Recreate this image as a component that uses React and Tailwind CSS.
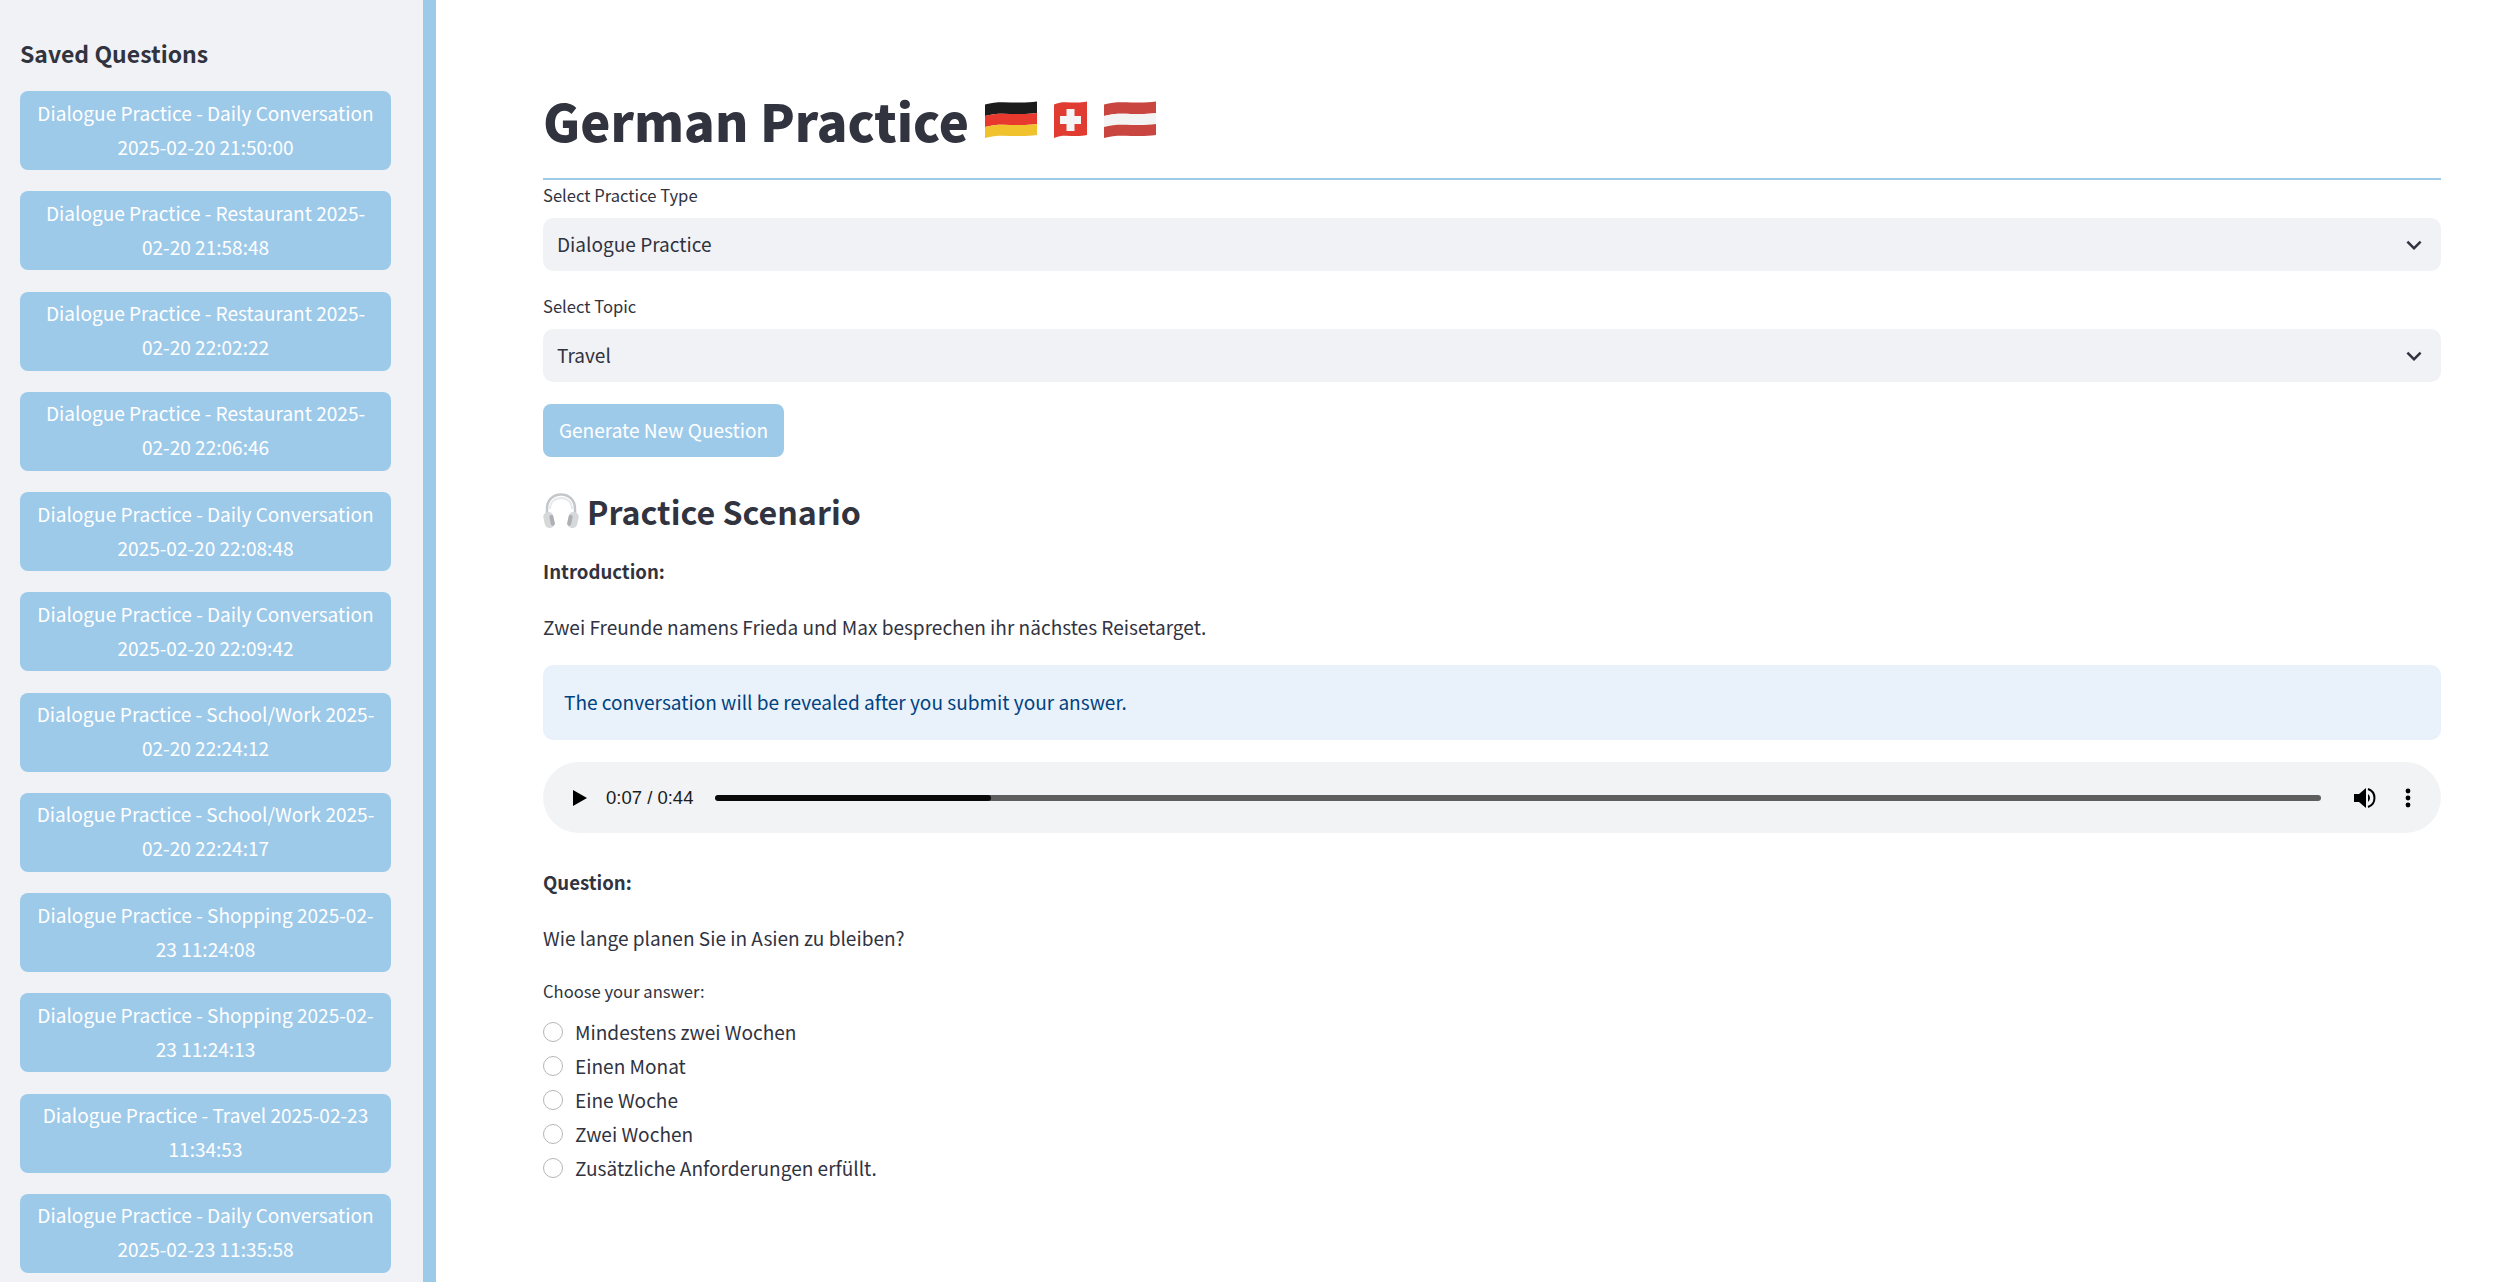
const saved = [
  "Dialogue Practice - Daily Conversation 2025-02-20 21:50:00",
  "Dialogue Practice - Restaurant 2025-02-20 21:58:48",
  "Dialogue Practice - Restaurant 2025-02-20 22:02:22",
  "Dialogue Practice - Restaurant 2025-02-20 22:06:46",
  "Dialogue Practice - Daily Conversation 2025-02-20 22:08:48",
  "Dialogue Practice - Daily Conversation 2025-02-20 22:09:42",
  "Dialogue Practice - School/Work 2025-02-20 22:24:12",
  "Dialogue Practice - School/Work 2025-02-20 22:24:17",
  "Dialogue Practice - Shopping 2025-02-23 11:24:08",
  "Dialogue Practice - Shopping 2025-02-23 11:24:13",
  "Dialogue Practice - Travel 2025-02-23 11:34:53",
  "Dialogue Practice - Daily Conversation 2025-02-23 11:35:58",
];
const answers = ["Mindestens zwei Wochen", "Einen Monat", "Eine Woche", "Zwei Wochen", "Zusätzliche Anforderungen erfüllt."];

function Flag({ w, children }) {
  return (
    <svg width={w} height="38" viewBox={`0 0 ${w} 38`} className="shrink-0">
      {children}
    </svg>
  );
}
const wave = (w, a, b) =>
  `M0 ${a + 3} C${w * 0.3} ${a - 2} ${w * 0.6} ${a + 3} ${w} ${a} V${b} C${w * 0.6} ${b + 3} ${w * 0.3} ${b - 2} 0 ${b + 3} Z`;

function Germany() {
  return (
    <Flag w={52}>
      <path d={wave(52, 0.5, 12)} fill="#1c1c1c" />
      <path d={wave(52, 12, 23)} fill="#e8392f" />
      <path d={wave(52, 23, 34)} fill="#f0c22e" />
    </Flag>
  );
}
function Swiss() {
  return (
    <Flag w={33}>
      <path d={wave(33, 0.5, 34)} fill="#e03c31" />
      <path d="M12.5 8h8v7h6.5v8h-6.5v7h-8v-7H6v-8h6.5z" fill="#f4f4f4" />
    </Flag>
  );
}
function Austria() {
  return (
    <Flag w={52}>
      <path d={wave(52, 0.5, 12)} fill="#c9453f" />
      <path d={wave(52, 12, 23)} fill="#f3f3f3" />
      <path d={wave(52, 23, 34)} fill="#c9453f" />
    </Flag>
  );
}
function Headphones() {
  return (
    <svg width="36" height="38" viewBox="0 0 36 38" className="shrink-0">
      <path d="M4 24V17C4 8 10 2.5 18 2.5S32 8 32 17v7" fill="none" stroke="#c4c7ca" strokeWidth="2.5" />
      <path d="M7 17C7 10 12 6 18 6s11 4 11 11" fill="none" stroke="#e6e8ea" strokeWidth="2" />
      <rect x="1" y="20" width="10" height="16" rx="4.5" fill="#d6d8da" transform="rotate(-12 6 28)" />
      <rect x="25" y="20" width="10" height="16" rx="4.5" fill="#d6d8da" transform="rotate(12 30 28)" />
      <rect x="7" y="23" width="4" height="11" rx="2" fill="#acafb3" transform="rotate(-12 8 28)" />
      <rect x="25" y="23" width="4" height="11" rx="2" fill="#acafb3" transform="rotate(12 28 28)" />
    </svg>
  );
}
function Chevron() {
  return (
    <svg width="30" height="30" viewBox="0 0 24 24" className="shrink-0">
      <path d="M7.41 8.59 12 13.17l4.59-4.58L18 10l-6 6-6-6z" fill="#31333f" />
    </svg>
  );
}
function Select({ label, value, top }) {
  return (
    <div className={top}>
      <div className="h-[33px] text-[16.6px] leading-[31px]">{label}</div>
      <div className="mt-[5px] flex h-[53px] items-center justify-between rounded-[10px] bg-[#f0f2f6] pl-[14px] pr-[12px] text-[19.06px] leading-[30px]">
        <span className="pb-[2px]">{value}</span>
        <Chevron />
      </div>
    </div>
  );
}

export default function App() {
  return (
    <div className="flex h-[1282px] w-full overflow-hidden bg-white font-['Noto_Sans_CJK_SC',sans-serif] text-[#31333f]">
      <aside className="flex w-[423px] shrink-0 flex-col overflow-hidden bg-[#f0f2f6] pl-[20px] pr-[32px]">
        <h2 className="mt-[36px] h-[36px] text-[23px] font-semibold leading-[34px]">Saved Questions</h2>
        <div className="mt-[19px] flex flex-col gap-[21.27px]">
          {saved.map((s) => (
            <button key={s} className="h-[79px] w-full shrink-0 rounded-[8px] bg-[#9ecaea] px-[16px] pb-[2px] text-center text-[19.06px] leading-[34px] text-white">
              {s}
            </button>
          ))}
        </div>
      </aside>
      <div className="w-[13px] shrink-0 bg-[#9ecaea]" />
      <main className="min-w-0 flex-1 pl-[107px] pr-[69px]">
        <div className="mt-[82px] flex h-[76px] items-center gap-[16px]">
          <h1 className="text-[50.8px] font-black leading-[70px]">German Practice</h1>
          <div className="flex items-center gap-[17px]">
            <Germany />
            <Swiss />
            <Austria />
          </div>
        </div>
        <div className="mt-[20px] h-[2px] bg-[#9ecaea]" />
        <Select label="Select Practice Type" value="Dialogue Practice" top="" />
        <Select label="Select Topic" value="Travel" top="mt-[20px]" />
        <button className="mt-[22px] flex h-[53px] w-[241px] items-center justify-center rounded-[8px] bg-[#9ecaea] pb-[2px] text-[19.06px] leading-[30px] text-white">
          Generate New Question
        </button>
        <div className="mt-[34px] flex h-[40px] items-center gap-[8px]">
          <Headphones />
          <h3 className="text-[32.2px] font-semibold leading-[36px]">Practice Scenario</h3>
        </div>
        <p className="mt-[22px] h-[34px] text-[18.6px] font-semibold leading-[36px]">Introduction:</p>
        <p className="mt-[23px] h-[34px] text-[19.06px] leading-[34px]">Zwei Freunde namens Frieda und Max besprechen ihr nächstes Reisetarget.</p>
        <div className="mt-[21px] flex h-[75px] items-center rounded-[10px] bg-[#e9f1fb] px-[21px] pb-[1px] text-[19.06px] leading-[30px] text-[#004280]">
          The conversation will be revealed after you submit your answer.
        </div>
        <div className="mt-[22px] flex h-[71px] items-center rounded-full bg-[#f1f3f4] pl-[30px] pr-[29px] font-['Liberation_Sans',sans-serif] text-black">
          <svg width="14" height="16" viewBox="0 0 14 16" className="shrink-0"><path d="M0 0l14 8-14 8z" fill="#000" /></svg>
          <span className="ml-[19px] w-[90px] shrink-0 whitespace-nowrap text-[18.5px] text-[#1b1b1b]">0:07 / 0:44</span>
          <div className="ml-[19px] flex h-[6px] min-w-0 flex-1 overflow-hidden rounded-full bg-[#5e5e5e]">
            <div className="h-full w-[276px] rounded-full bg-[#0a0a0a]" />
          </div>
          <svg width="22" height="20" viewBox="0 0 22 20" className="ml-[33px] shrink-0">
            <path d="M0 6h5l7-6v20l-7-6H0z" fill="#000" />
            <path d="M14 6a5 5 0 0 1 0 8z" fill="#000" />
            <path d="M14 1a9.5 9.5 0 0 1 0 18" fill="none" stroke="#000" strokeWidth="2" />
          </svg>
          <svg width="8" height="20" viewBox="0 0 8 20" className="ml-[28px] shrink-0">
            <circle cx="4" cy="3" r="2.4" fill="#000" />
            <circle cx="4" cy="10" r="2.4" fill="#000" />
            <circle cx="4" cy="17" r="2.4" fill="#000" />
          </svg>
        </div>
        <p className="mt-[34px] h-[34px] text-[18.6px] font-semibold leading-[30px]">Question:</p>
        <p className="mt-[22px] h-[34px] text-[19.06px] leading-[30px]">Wie lange planen Sie in Asien zu bleiben?</p>
        <div className="mt-[19px] h-[34px] text-[16.6px] leading-[30px]">Choose your answer:</div>
        <div className="mt-[5px] flex flex-col">
          {answers.map((a) => (
            <label key={a} className="flex h-[34px] items-center gap-[12px] text-[19.06px] leading-[28px]">
              <span className="h-[20px] w-[20px] shrink-0 rounded-full border-[1.5px] border-[#b4b6ba] bg-white" />
              <span className="pb-[1px]">{a}</span>
            </label>
          ))}
        </div>
      </main>
    </div>
  );
}
